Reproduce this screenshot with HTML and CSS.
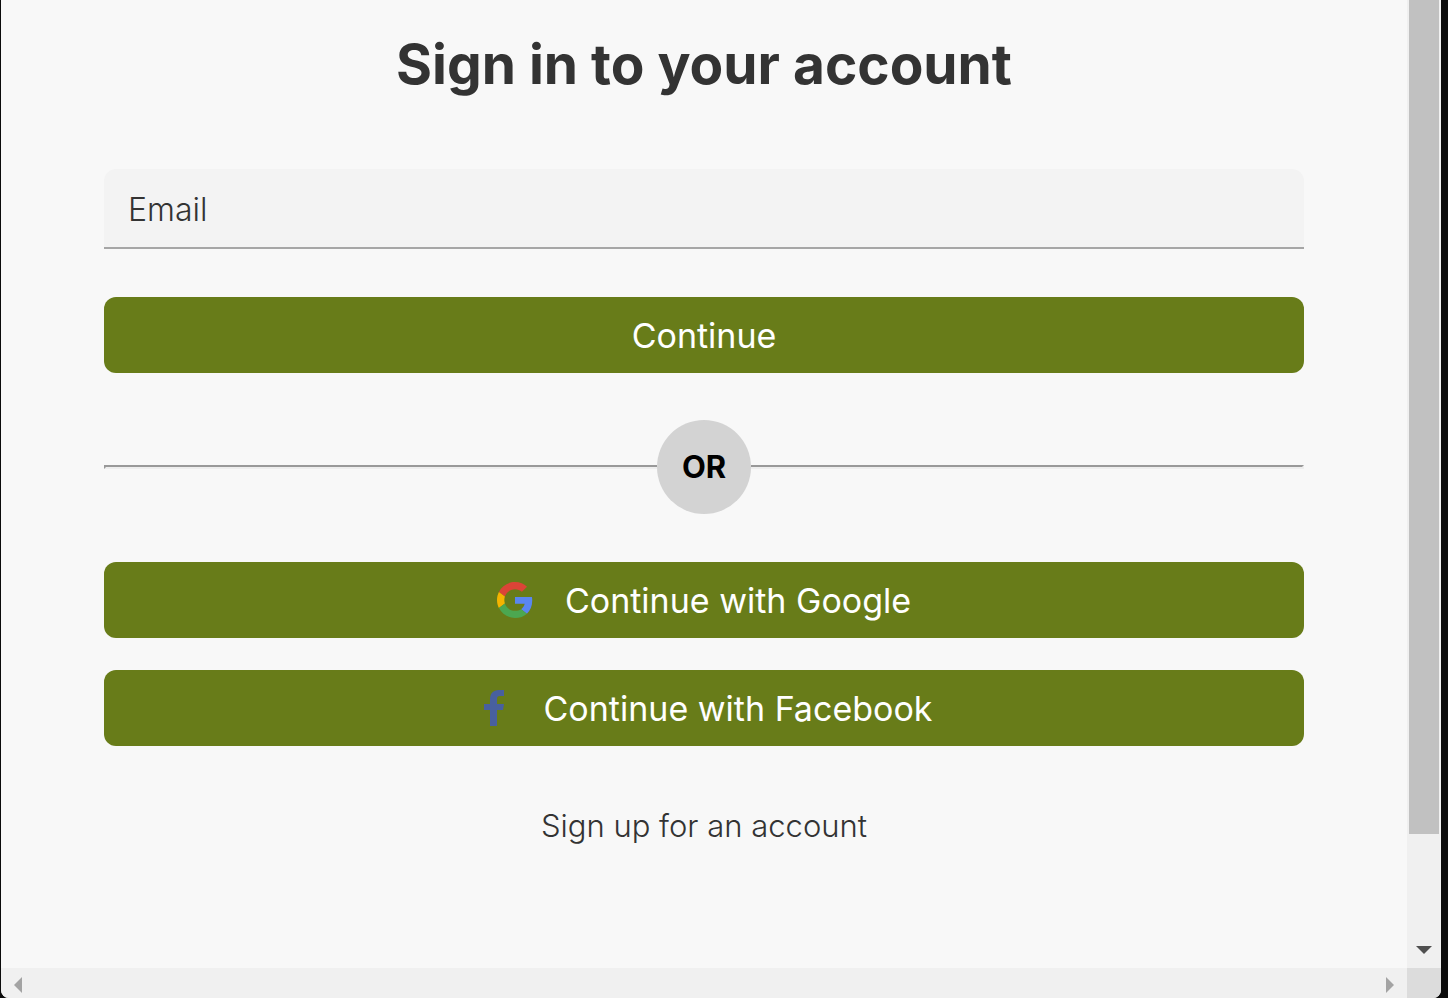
FILE: index.html
```html
<!DOCTYPE html>
<html lang="en">
<head>
  <meta charset="UTF-8">
  <meta name="viewport" content="width=device-width, initial-scale=1.0">
  <title>Sign in to your account</title>
  <link rel="stylesheet" href="styles.css">
</head>
<body>
  <div class="window">
    <main class="content">
      <h1>Sign in to your account</h1>
      <form class="signin">
        <input type="email" id="email" class="email" placeholder="Email" aria-label="Email">
        <button type="submit" class="btn">Continue</button>
      </form>
      <div class="divider">
        <hr class="line-left">
        <span class="or">OR</span>
        <hr class="line-right">
      </div>
      <div class="social">
        <button type="button" class="btn">
          <svg class="icon" viewBox="0 0 48 48" aria-hidden="true">
            <path fill="#db4437" d="M24 9.5c3.54 0 6.71 1.22 9.21 3.6l6.85-6.85C35.9 2.38 30.47 0 24 0 14.62 0 6.51 5.38 2.56 13.22l7.98 6.19C12.43 13.72 17.74 9.5 24 9.5z"/>
            <path fill="#5a86f0" d="M46.98 24.55c0-1.57-.15-3.09-.38-4.55H24v9.02h12.94c-.58 2.96-2.26 5.48-4.78 7.18l7.73 6c4.51-4.18 7.09-10.36 7.09-17.65z"/>
            <path fill="#f4b400" d="M10.53 28.59c-.48-1.45-.76-2.99-.76-4.59s.27-3.14.76-4.59l-7.98-6.19C.92 16.46 0 20.12 0 24c0 3.88.92 7.54 2.56 10.78l7.97-6.19z"/>
            <path fill="#4ca750" d="M24 48c6.48 0 11.93-2.13 15.89-5.81l-7.73-6c-2.15 1.45-4.92 2.3-8.16 2.3-6.26 0-11.57-4.22-13.47-9.91l-7.98 6.19C6.51 42.62 14.62 48 24 48z"/>
          </svg>
          Continue with Google
        </button>
        <button type="button" class="btn">
          <svg class="icon" viewBox="0 0 36 36" aria-hidden="true">
            <path fill="#48609f" d="M14 36V20H8v-6h6V9.500C14 3.500 17 0 23 0h5v6h-4c-2.500 0-3 1-3 3.500V14h7l-1 6h-6v16z"/>
          </svg>
          Continue with Facebook
        </button>
      </div>
      <a href="#" class="signup">Sign up for an account</a>
    </main>
    <div class="scroll-y">
      <div class="thumb"></div>
      <svg class="arrow-down" viewBox="0 0 16 8" aria-hidden="true"><path fill="#505050" d="M0 0h16L8 8z"/></svg>
    </div>
    <div class="scroll-x">
      <svg class="arrow-side" viewBox="0 0 8 16" aria-hidden="true"><path fill="#a3a3a3" d="M8 0v16L0 8z"/></svg>
      <svg class="arrow-side" viewBox="0 0 8 16" aria-hidden="true"><path fill="#a3a3a3" d="M0 0v16l8-8z"/></svg>
    </div>
    <div class="corner"></div>
  </div>
</body>
</html>
```
FILE: styles.css
```css
* {
  box-sizing: border-box;
}
body {
  margin: 0;
  padding: 0 7px 0 1px;
  background: #0b0b0b;
  color: #333;
  font-family: Inter, "Noto Sans", sans-serif;
}
.window {
  display: grid;
  grid-template-columns: 1fr 34px;
  grid-template-rows: 1fr 30px;
  min-height: 100vh;
  background: #f8f8f8;
  border-radius: 0 0 8px 8px;
  overflow: hidden;
}
.content {
  display: flex;
  flex-direction: column;
  padding: 32px 103px 0;
}
h1 {
  margin: 0 0 73px;
  font-size: 55px;
  line-height: 64px;
  font-weight: 700;
  text-align: center;
}
.signin {
  display: flex;
  flex-direction: column;
  gap: 48px;
}
.email {
  width: 100%;
  height: 80px;
  padding: 2px 24px 0;
  border: none;
  border-bottom: 2px solid #a6a6a6;
  border-radius: 12px 12px 0 0;
  background: #f3f3f3;
  color: #333;
  font: inherit;
  font-size: 32px;
  font-weight: 300;
}
.email::placeholder {
  color: #333;
  opacity: 1;
}
.btn {
  display: flex;
  align-items: center;
  justify-content: center;
  gap: 32px;
  width: 100%;
  height: 76px;
  border: none;
  border-radius: 12px;
  background: #687c19;
  color: #fff;
  font: inherit;
  font-size: 34px;
  cursor: pointer;
}
.icon {
  width: 36px;
  height: 36px;
}
.divider {
  display: flex;
  align-items: center;
  margin: 47px 0 48px;
}
.divider hr {
  flex: 1;
  margin: 0;
  border: 2px solid;
  border-color: #999 #eee #eee #999;
}
.divider .line-left {
  border-right: none;
}
.divider .line-right {
  border-left: none;
}
.or {
  width: 94px;
  height: 94px;
  border-radius: 50%;
  background: #d3d3d3;
  color: #000;
  font-size: 31px;
  line-height: 94px;
  font-weight: 700;
  text-align: center;
}
.social {
  display: flex;
  flex-direction: column;
  gap: 32px;
}
.signup {
  margin-top: 60px;
  align-self: center;
  color: #333;
  font-size: 31px;
  line-height: 40px;
  font-weight: 300;
  text-decoration: none;
}
.scroll-y {
  display: flex;
  flex-direction: column;
  justify-content: space-between;
  align-items: center;
  padding: 0 2px 14px;
  background: #f0f0f0;
}
.thumb {
  width: 30px;
  height: 87.4%;
  background: #c1c1c1;
}
.arrow-down {
  width: 16px;
  height: 8px;
}
.scroll-x {
  display: flex;
  align-items: center;
  justify-content: space-between;
  padding: 4px 13px 0;
  background: #f0f0f0;
}
.arrow-side {
  width: 8px;
  height: 16px;
}
.corner {
  background: #dcdcdc;
}
```
